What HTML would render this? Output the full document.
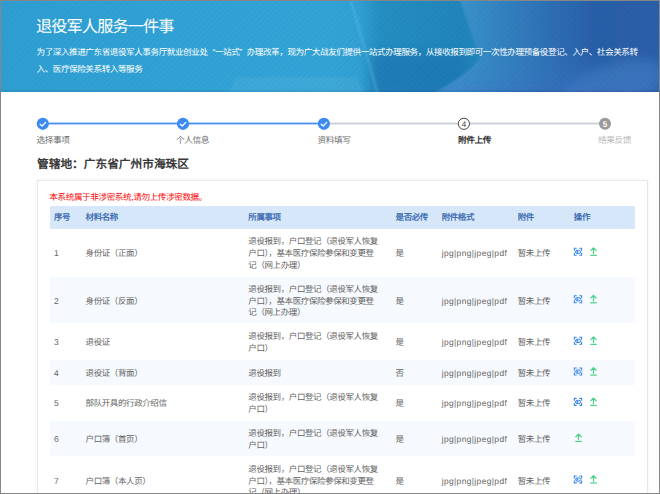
<!DOCTYPE html>
<html lang="zh-CN">
<head>
<meta charset="utf-8">
<style>
*{margin:0;padding:0;box-sizing:border-box}
html,body{width:660px;height:494px;overflow:hidden;background:#fff}
body{font-family:"Liberation Sans",sans-serif;position:relative;text-rendering:geometricPrecision}
#wrap{position:absolute;left:0;top:0;width:660px;height:494px;overflow:hidden;background:#fff}
#frame{position:absolute;left:0;top:0;width:660px;height:494px;border:1px solid #868686;z-index:50;pointer-events:none}
#hdr{position:absolute;left:0;top:0;width:660px;height:92px;overflow:hidden;
 background:linear-gradient(90deg,#2ea2d6 0%,#33a4d8 45%,#2f8acb 62%,#2c6cb6 80%,#2b5ea9 100%)}
#hdr svg{position:absolute;left:0;top:0}
.t{position:absolute;white-space:nowrap}
#title{left:36px;top:14.5px;font-size:16.2px;letter-spacing:-0.9px;line-height:24px;color:#fff}
#desc{left:36.5px;top:44.2px;width:610px;font-size:8.6px;letter-spacing:-0.45px;line-height:17.3px;color:#fff;white-space:normal}
.seg{position:absolute;top:123px;height:2px}
.dot{position:absolute;top:118px;width:12.4px;height:12.4px;border-radius:50%}
.lbl{position:absolute;top:134px;font-size:8.7px;letter-spacing:-0.4px;line-height:12px;color:#6e6e6e;white-space:nowrap}
#gx{left:37px;top:157px;font-size:11.7px;line-height:16px;font-weight:bold;color:#3a3a3a}
#card{position:absolute;left:37px;top:180px;width:611px;height:340px;border:1px solid #e6e8ed;background:#fff;box-shadow:0 0 3px rgba(0,0,0,.06)}
#warn{left:49.3px;top:190.8px;font-size:8.6px;letter-spacing:-0.4px;line-height:12px;color:#f00}
table{position:absolute;left:50px;top:206px;width:585px;border-collapse:collapse;table-layout:fixed;font-size:8.5px;letter-spacing:-0.4px;color:#636363}
th{height:22.6px;background:#d6e7f9;color:#3465ad;font-weight:500;-webkit-text-stroke:0.25px #3465ad;text-align:left;padding:0 0 0 4px;font-size:8.5px;letter-spacing:-0.4px}
td{padding:2.4px 0 0 4px;line-height:11.7px;vertical-align:middle}
td.fmt{font-size:8.4px;letter-spacing:0.4px}
tr.alt td{background:#f6fafe}
</style>
</head>
<body>
<div id="wrap">
 <div id="hdr">
  <svg width="660" height="92" viewBox="0 0 660 92">
   <defs>
    <linearGradient id="gb" x1="0" y1="0" x2="660" y2="0" gradientUnits="userSpaceOnUse">
     <stop offset="0" stop-color="#2f9fd3"/>
     <stop offset="0.3" stop-color="#31a3d7"/>
     <stop offset="0.5" stop-color="#33a4d7"/>
     <stop offset="0.545" stop-color="#31a0d4"/>
     <stop offset="0.575" stop-color="#258fc2"/>
     <stop offset="0.69" stop-color="#2186bc"/>
     <stop offset="1" stop-color="#2186bc"/>
    </linearGradient>
    <linearGradient id="gr" x1="455" y1="0" x2="660" y2="0" gradientUnits="userSpaceOnUse">
     <stop offset="0" stop-color="#3b94cb"/>
     <stop offset="0.15" stop-color="#3589c4"/>
     <stop offset="0.45" stop-color="#2e70b6"/>
     <stop offset="0.7" stop-color="#285ea8"/>
     <stop offset="1" stop-color="#2b5eaa"/>
    </linearGradient>
    <linearGradient id="gv" x1="0" y1="0" x2="0" y2="92" gradientUnits="userSpaceOnUse">
     <stop offset="0" stop-color="#4a8fd0" stop-opacity="0"/>
     <stop offset="0.55" stop-color="#4a8fd0" stop-opacity="0"/>
     <stop offset="1" stop-color="#3b6fc6" stop-opacity="0.35"/>
    </linearGradient>
    <pattern id="st" width="4" height="4" patternUnits="userSpaceOnUse" patternTransform="rotate(-45)">
     <rect width="4" height="1.3" fill="#000" fill-opacity="0.035"/>
    </pattern>
    <filter id="bl" x="-10%" y="-10%" width="120%" height="120%"><feGaussianBlur stdDeviation="1.2"/></filter>
    <filter id="bl2" x="-30%" y="-30%" width="160%" height="160%"><feGaussianBlur stdDeviation="6"/></filter>
   </defs>
   <rect width="660" height="92" fill="url(#gb)"/>
   <rect x="372" y="52" width="95" height="45" fill="#1a76b5" opacity="0.7" filter="url(#bl2)"/>
   <path d="M458,-5 L480,58 C470,72 450,84 428,97 L665,97 L665,-5 Z" fill="url(#gr)" filter="url(#bl)"/>
   <path d="M458,-5 L480,58 C470,72 450,84 428,97 L665,97 L665,-5 Z" fill="url(#gv)" filter="url(#bl)"/>
   <ellipse cx="610" cy="88" rx="55" ry="22" fill="#4a86cc" opacity="0.45" filter="url(#bl2)" transform="rotate(-20 610 88)"/>
   <path d="M350,-2 L378,94" stroke="#7fd0f2" stroke-opacity="0.22" stroke-width="3" filter="url(#bl)"/>
   <path d="M228,94 L236,77 L356,77 L366,94 Z" fill="#ffffff" fill-opacity="0.05" filter="url(#bl)"/>
   <rect width="660" height="92" fill="url(#st)"/>
   <rect y="90" width="660" height="2" fill="#000" fill-opacity="0.06"/>
  </svg>
  <div class="t" id="title">退役军人服务一件事</div>
  <div class="t" id="desc">为了深入推进广东省退役军人事务厅就业创业处 <span style="margin-left:3px">“</span>一站式<span style="margin-right:3px">”</span> 办理改革，现为广大战友们提供一站式办理服务，从接收报到即可一次性办理预备役登记、入户、社会关系转<br>入、医疗保险关系转入等服务</div>
 </div>

 <svg width="660" height="140" viewBox="0 0 660 140" style="position:absolute;left:0;top:0">
  <rect x="43" y="122.6" width="281" height="1.8" fill="#4a90f0"/>
  <rect x="324" y="122.6" width="281" height="1.8" fill="#c9cdd4"/>
  <g fill="#3d8bf0">
   <circle cx="42.8" cy="123.8" r="6.1"/>
   <circle cx="183" cy="123.8" r="6.1"/>
   <circle cx="323.9" cy="123.8" r="6.1"/>
  </g>
  <g fill="none" stroke="#fff" stroke-width="1.3" stroke-linecap="round" stroke-linejoin="round">
   <path d="M40.1,124.3 L42.1,126 L45.6,122.4"/>
   <path d="M180.3,124.3 L182.3,126 L185.8,122.4"/>
   <path d="M321.2,124.3 L323.2,126 L326.7,122.4"/>
  </g>
  <circle cx="463.9" cy="123.8" r="5.6" fill="#fff" stroke="#484848" stroke-width="1"/>
  <circle cx="605" cy="123.8" r="6" fill="#9a9a9a"/>
  <text x="463.9" y="127" font-size="8" text-anchor="middle" fill="#333" font-family="Liberation Sans">4</text>
  <text x="605" y="127" font-size="8" text-anchor="middle" fill="#fff" font-weight="bold" font-family="Liberation Sans">5</text>
 </svg>
 <div class="lbl" style="left:36.5px">选择事项</div>
 <div class="lbl" style="left:176px">个人信息</div>
 <div class="lbl" style="left:317.5px">资料填写</div>
 <div class="lbl" style="left:458px;color:#333;font-weight:bold">附件上传</div>
 <div class="lbl" style="left:598px;color:#bbb">结果反馈</div>

 <div class="t" id="gx">管辖地：广东省广州市海珠区</div>

 <div id="card"></div>
 <div class="t" id="warn">本系统属于非涉密系统,请勿上传涉密数据。</div>

 <table>
  <colgroup><col style="width:31.5px"><col style="width:162.5px"><col style="width:147px"><col style="width:46px"><col style="width:76px"><col style="width:56px"><col style="width:65px"></colgroup>
  <tr><th>序号</th><th>材料名称</th><th>所属事项</th><th>是否必传</th><th>附件格式</th><th>附件</th><th>操作</th></tr>
  <tr style="height:48.3px"><td>1</td><td>身份证（正面）</td><td>退役报到，户口登记（退役军人恢复<br>户口），基本医疗保险参保和变更登<br>记（网上办理）</td><td>是</td><td class="fmt">jpg|png|jpeg|pdf</td><td>暂未上传</td><td></td></tr>
  <tr class="alt" style="height:46.6px"><td>2</td><td>身份证（反面）</td><td>退役报到，户口登记（退役军人恢复<br>户口），基本医疗保险参保和变更登<br>记（网上办理）</td><td>是</td><td class="fmt">jpg|png|jpeg|pdf</td><td>暂未上传</td><td></td></tr>
  <tr style="height:36.5px"><td>3</td><td>退役证</td><td>退役报到，户口登记（退役军人恢复<br>户口）</td><td>是</td><td class="fmt">jpg|png|jpeg|pdf</td><td>暂未上传</td><td></td></tr>
  <tr class="alt" style="height:25px"><td>4</td><td>退役证（背面）</td><td>退役报到</td><td>否</td><td class="fmt">jpg|png|jpeg|pdf</td><td>暂未上传</td><td></td></tr>
  <tr style="height:35.7px"><td>5</td><td>部队开具的行政介绍信</td><td>退役报到，户口登记（退役军人恢复<br>户口）</td><td>是</td><td class="fmt">jpg|png|jpeg|pdf</td><td>暂未上传</td><td></td></tr>
  <tr class="alt" style="height:35.7px"><td>6</td><td>户口簿（首页）</td><td>退役报到，户口登记（退役军人恢复<br>户口）</td><td>是</td><td class="fmt">jpg|png|jpeg|pdf</td><td>暂未上传</td><td></td></tr>
  <tr style="height:48px"><td>7</td><td>户口簿（本人页）</td><td>退役报到，户口登记（退役军人恢复<br>户口），基本医疗保险参保和变更登<br>记（网上办理）</td><td>是</td><td class="fmt">jpg|png|jpeg|pdf</td><td>暂未上传</td><td></td></tr>
 </table>


 <svg id="ico" width="660" height="494" style="position:absolute;left:0;top:0;z-index:5" viewBox="0 0 660 494">
  <defs>
   <g id="eye" fill="none" stroke="#3a86ef" stroke-width="1.1">
    <path d="M0.55,3 V0.55 H2.9 M5.5,0.55 H7.85 V3 M0.55,5.1 V7.5 H2.9 M5.5,7.5 H7.85 V5.1"/>
    <ellipse cx="4.25" cy="4.1" rx="2.75" ry="1.75" stroke-width="1"/>
    <circle cx="3.6" cy="4.1" r="1.05" fill="#3a86ef" stroke="none"/>
   </g>
   <g id="up" fill="none" stroke="#4ccf88" stroke-width="1.2" stroke-linecap="round">
    <path d="M3.5,1 V6.6 M0.8,3.7 L3.5,1 L6.2,3.7"/>
    <path d="M0.2,8.4 H6.8" stroke-linecap="butt"/>
   </g>
  </defs>
  <use href="#eye" x="573.8" y="247.75"/>
  <use href="#up" x="590" y="246.95"/>
  <use href="#eye" x="573.8" y="295.20"/>
  <use href="#up" x="590" y="294.40"/>
  <use href="#eye" x="573.8" y="336.75"/>
  <use href="#up" x="590" y="335.95"/>
  <use href="#eye" x="573.8" y="367.50"/>
  <use href="#up" x="590" y="366.70"/>
  <use href="#eye" x="573.8" y="397.85"/>
  <use href="#up" x="590" y="397.05"/>
  <use href="#up" x="575" y="433.05"/>
  <use href="#eye" x="573.8" y="475.40"/>
  <use href="#up" x="590" y="474.60"/>
 </svg>
 <div id="frame"></div>
</div>
</body>
</html>
